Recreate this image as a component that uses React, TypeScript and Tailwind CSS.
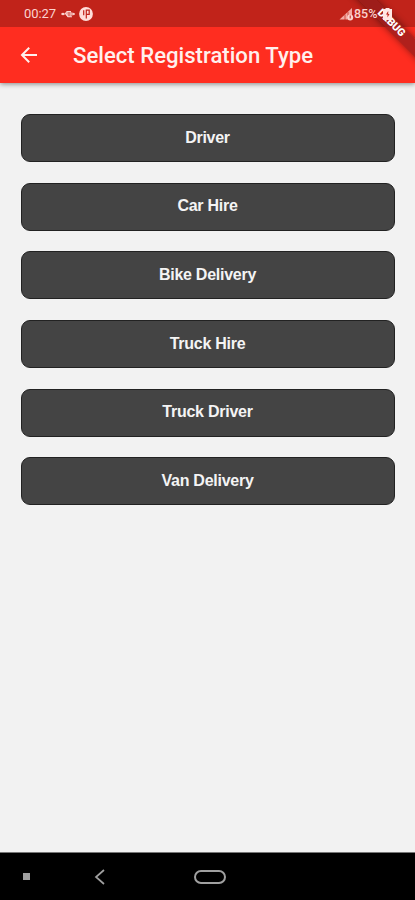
const options = ['Driver', 'Car Hire', 'Bike Delivery', 'Truck Hire', 'Truck Driver', 'Van Delivery'];

function StatusBar() {
  return (
    <div className="h-[27px] bg-[#c1231a]">
      <div className="relative z-20 flex h-[27px] items-center pr-[23px] pl-[24px] text-[#fbd3cf]">
        <span className="w-[34px] whitespace-nowrap text-[13px] leading-[27px] tracking-[-.1px]">00:27</span>
        <svg className="ml-[3px] h-[12px] w-[14px]" viewBox="0 0 14 12" fill="none" stroke="currentColor">
          <path d="M0 6h14M4 6l2-2.500h4M5 6l2 2.700h4" strokeWidth="1.100" />
          <circle cx="2" cy="6" r="1.200" fill="currentColor" stroke="none" />
          <path d="M6 4h4v4H6z" strokeWidth="1" />
          <path d="M11.500 4.200 14 6l-2.500 1.800z" fill="currentColor" stroke="none" />
        </svg>
        <svg className="ml-[4px] h-[14px] w-[14px]" viewBox="0 0 14 14">
          <circle cx="7" cy="7" r="6.900" fill="#ffdeda" />
          <path d="M4.700 3.200v5M7.300 11.500V3.200h2.900v4.200H7.300" fill="none" stroke="#c1231a" strokeWidth="1.200" />
        </svg>
        <div className="grow" />
        <svg className="h-[14px] w-[15px]" viewBox="0 0 15 14">
          <path d="M.5 12.500 13 1v11.500z" fill="#f3aaa4" />
          <path d="M6 13V7.500M9 13V5" stroke="#c1231a" strokeWidth=".7" />
          <circle cx="11.200" cy="10.500" r="3" fill="#fbd3cf" />
          <path d="M11.200 8.500v3" stroke="#c1231a" strokeWidth="1" />
        </svg>
        <span className="w-[29px] whitespace-nowrap text-[12.500px] leading-[27px] font-medium">85%</span>
        <svg className="h-[12px] w-[9px]" viewBox="0 0 9 12">
          <path d="M0 1h2.500V0h4v1H9v11H0z" fill="#ffe7e4" />
          <path d="M5.200 3 3 6.500h1.500v3L6.500 6H5.200z" fill="#c1231a" />
        </svg>
      </div>
    </div>
  );
}

export default function App() {
  return (
    <div className="relative flex h-[900px] w-[415px] flex-col overflow-hidden bg-[#f2f2f2] font-['Roboto',sans-serif]">
      <header className="shrink-0 bg-[#ff2d20] shadow-[0_1px_5px_rgba(0,0,0,0.45)]">
        <StatusBar />
        <div className="flex h-[56px] items-center pl-[20px] text-[#fff0ed]">
          <svg className="h-[18px] w-[18px]" viewBox="0 0 18 18" fill="none" stroke="currentColor" strokeWidth="2">
            <path d="M17 9H2.200M9.200 1.800 2 9l7.200 7.200" />
          </svg>
          <h1 className="ml-[35px] whitespace-nowrap text-[22.150px] leading-[56px] font-medium">Select Registration Type</h1>
        </div>
      </header>

      <main className="flex grow flex-col gap-[20.650px] pt-[31.200px] pr-[20px] pl-[21px]">
        {options.map((label) => (
          <button
            key={label}
            className="h-[48px] w-full shrink-0 rounded-[9px] border border-[#222] bg-[#444] pr-px pb-[1px] font-['Liberation_Sans',Arial,sans-serif] text-[16px] font-bold tracking-[-.26px] text-[#f4f4f4]"
          >
            {label}
          </button>
        ))}
      </main>

      <nav className="flex h-[48px] shrink-0 items-center border-t border-[#777] bg-black text-[#a0a0a0]">
        <span className="ml-[23px] h-[7px] w-[7px] bg-current" />
        <svg className="ml-[64px] h-[16px] w-[11px]" viewBox="0 0 11 16" fill="none" stroke="currentColor" strokeWidth="1.700">
          <path d="M10 1 2 8l8 7" />
        </svg>
        <span className="ml-[89px] h-[14px] w-[32px] rounded-full border-2 border-current" />
      </nav>

      <div className="absolute top-[17px] left-[341px] z-10 flex h-[12.600px] w-[100px] rotate-45 items-center justify-center bg-[#8f1b1b]/70 text-[10.600px] leading-none font-black text-white shadow-[0_0_7px_rgba(0,0,0,0.45)]">
        DEBUG
      </div>
    </div>
  );
}
